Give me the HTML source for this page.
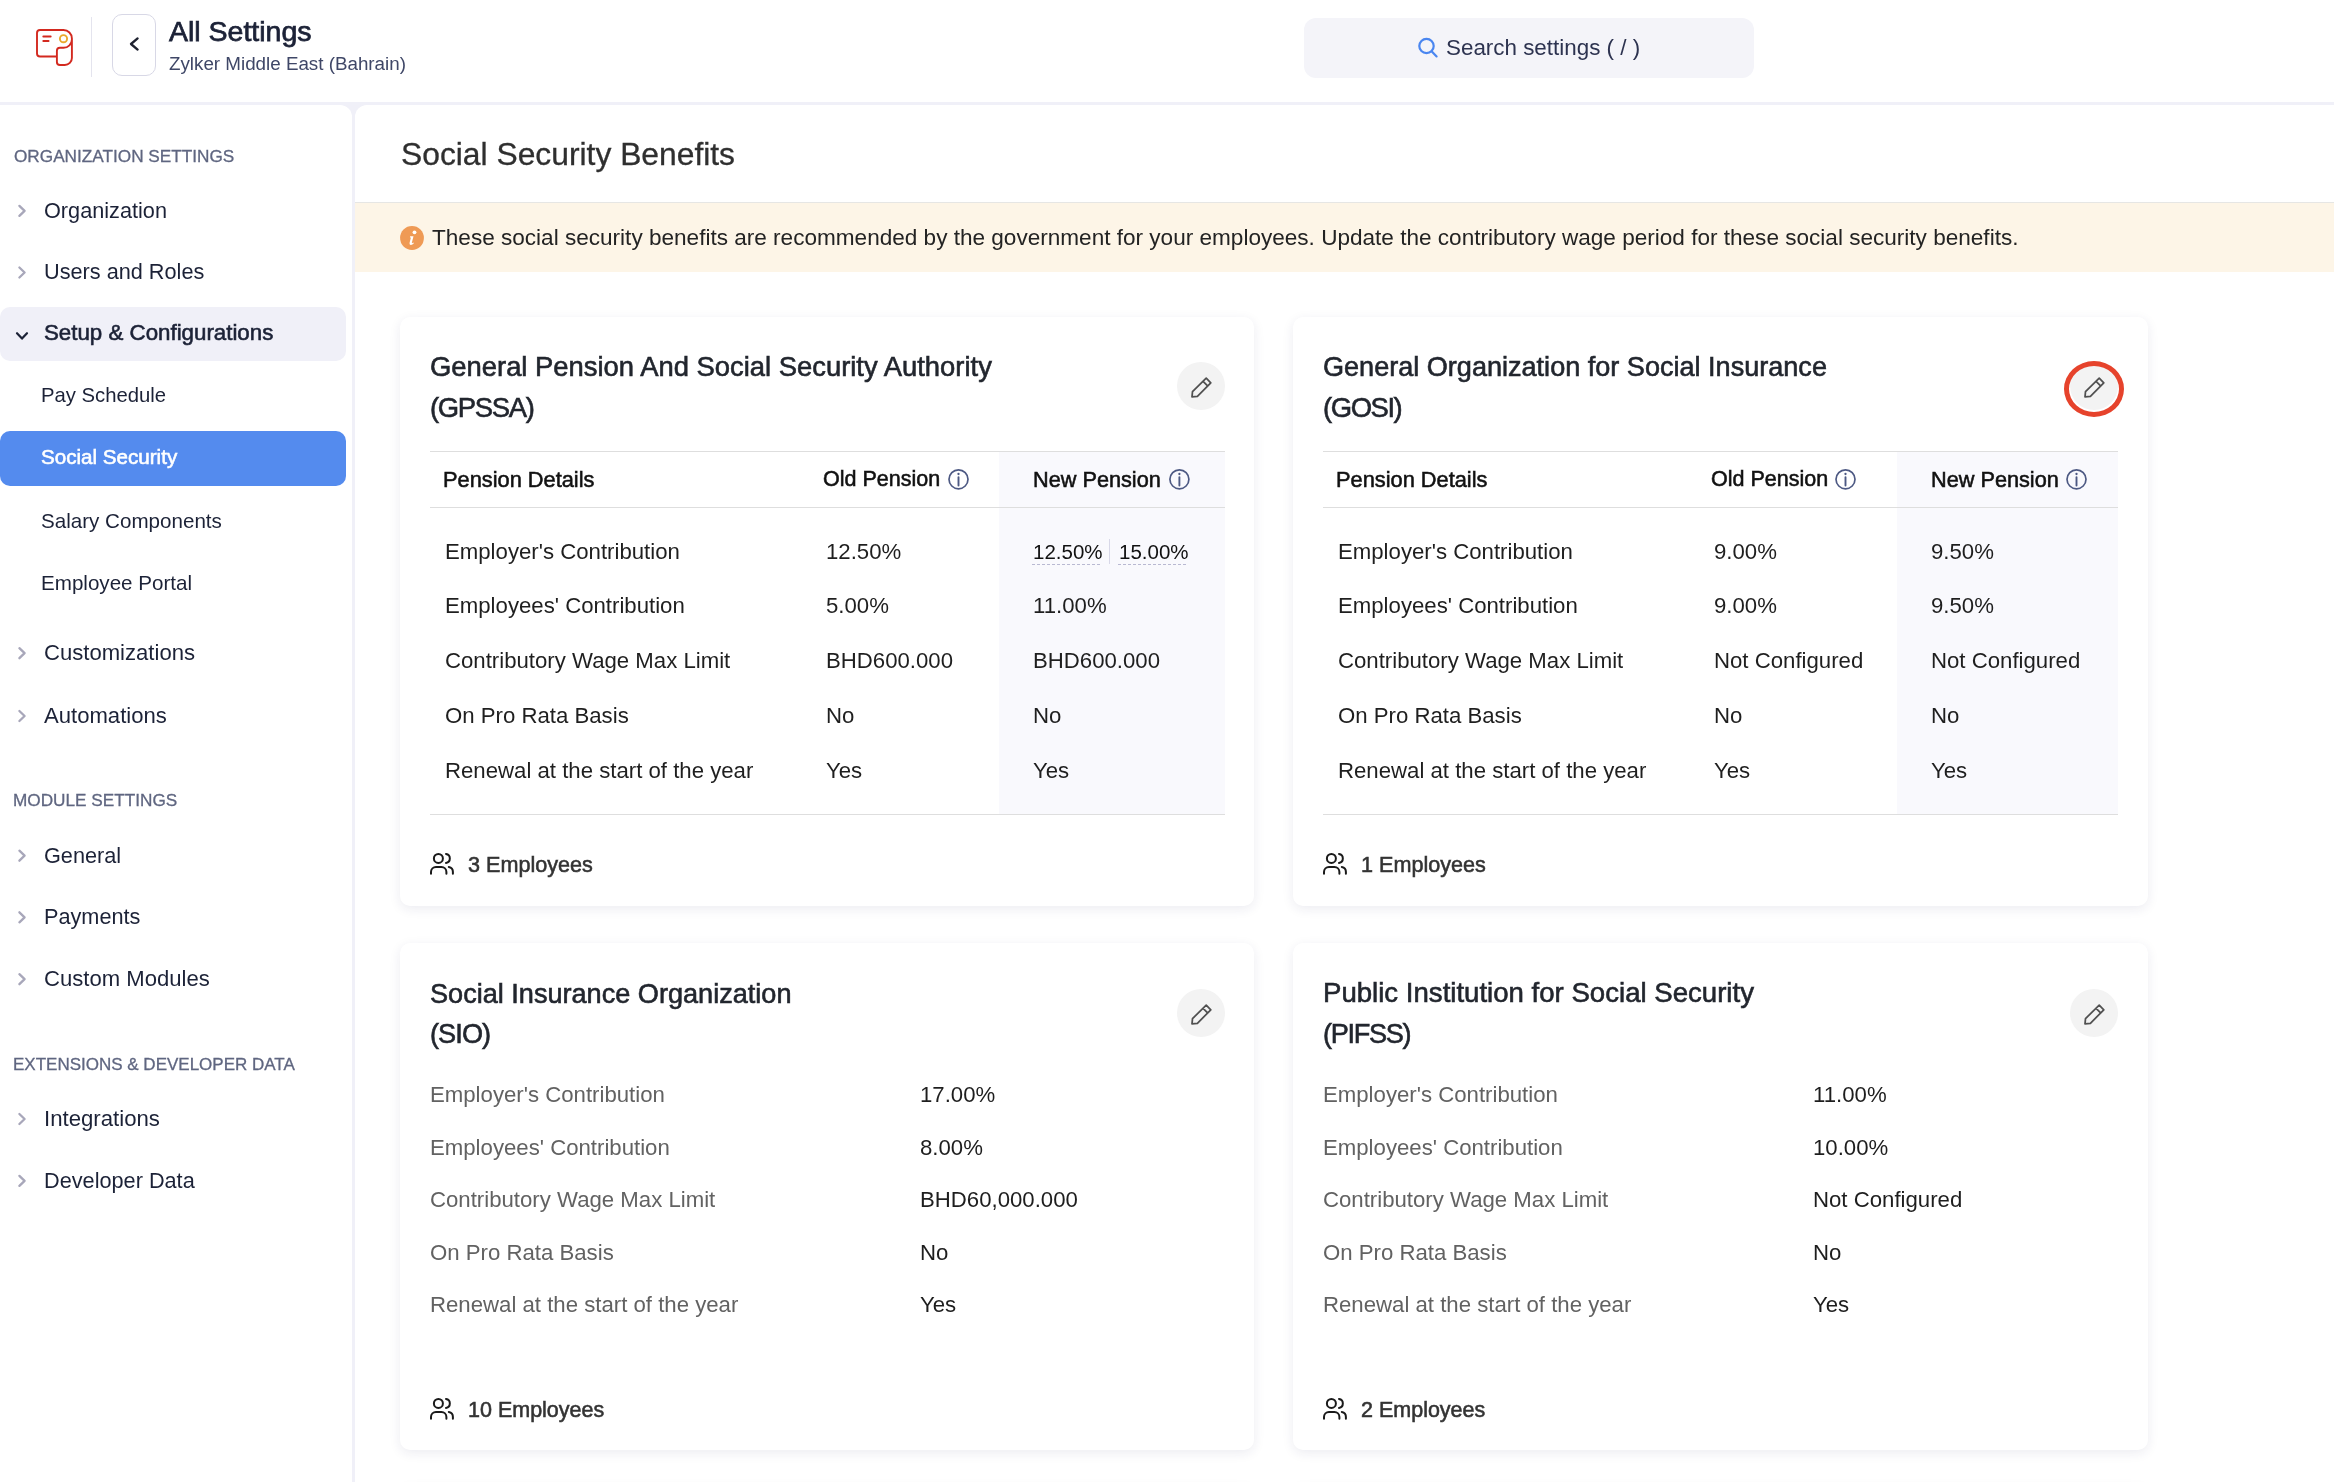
<!DOCTYPE html>
<html><head><meta charset="utf-8"><title>All Settings - Social Security</title>
<style>
html,body{margin:0;padding:0;}
body{width:2334px;height:1482px;overflow:hidden;position:relative;background:#f0f0f8;font-family:"Liberation Sans",sans-serif;}
.a{position:absolute;}
.t{position:absolute;white-space:nowrap;line-height:1;will-change:transform;}
svg.a{overflow:visible;}
</style></head><body>
<div class="a" style="left:0px;top:0px;width:2334px;height:102px;background:#fff"></div>
<svg class="a" style="left:30px;top:24px" width="50" height="48" viewBox="0 0 50 48" fill="none"><path d="M26.9 32.5H10a3 3 0 0 1-3-3V9a3 3 0 0 1 3-3h23.5a8.4 8.4 0 0 1 8.4 8.4V34a7 7 0 0 1-7 7h-5a3 3 0 0 1-3-3V26.8a3 3 0 0 1 3-3h3.6a8.4 8.4 0 0 0 8.4-8.4" stroke="#d3291f" stroke-width="1.9" stroke-linejoin="round"/><path d="M13.3 12.5H20.7M13.3 17H18.6" stroke="#d3291f" stroke-width="1.9" stroke-linecap="round"/><circle cx="33.5" cy="14.7" r="3.6" stroke="#eaa92c" stroke-width="1.9"/></svg>
<div class="a" style="left:91px;top:17px;width:1px;height:60px;background:#e4e4ee"></div>
<div class="a" style="left:112px;top:14px;width:44px;height:62px;border:1px solid #d8d8e6;border-radius:10px;box-sizing:border-box;background:#fff"></div>
<svg class="a" style="left:112px;top:14px" width="44" height="62" viewBox="0 0 44 62" fill="none"><path d="M25.6 24.4L19 30l6.6 5.6" stroke="#1f2230" stroke-width="2.3" stroke-linecap="round" stroke-linejoin="round"/></svg>
<div class="t" style="left:168.5px;top:17.37px;font-size:28.5px;color:#1c2237;-webkit-text-stroke:0.75px #1c2237;">All Settings</div>
<div class="t" style="left:168.5px;top:55.09px;font-size:18.8px;color:#3f4767;">Zylker Middle East (Bahrain)</div>
<div class="a" style="left:1304px;top:18px;width:450px;height:60px;background:#f4f4f9;border-radius:12px"></div>
<svg class="a" style="left:1416px;top:35px" width="24" height="24" viewBox="0 0 24 24" fill="none"><circle cx="10.5" cy="11" r="7.2" stroke="#4a86f0" stroke-width="2.2"/><path d="M15.8 16.4L20.6 21.4" stroke="#4a86f0" stroke-width="2.2" stroke-linecap="round"/></svg>
<div class="t" style="left:1446.0px;top:36.64px;font-size:22.4px;color:#2d3350;">Search settings ( / )</div>
<div class="a" style="left:0px;top:105px;width:352px;height:1377px;background:#fff;border-top-right-radius:12px"></div>
<div class="t" style="left:13.7px;top:147.64px;font-size:17.2px;color:#5f6680;-webkit-text-stroke:0.3px #5f6680;">ORGANIZATION SETTINGS</div>
<div class="t" style="left:13.4px;top:791.74px;font-size:17.2px;color:#5f6680;-webkit-text-stroke:0.3px #5f6680;">MODULE SETTINGS</div>
<div class="t" style="left:13.4px;top:1056.01px;font-size:17.0px;color:#5f6680;-webkit-text-stroke:0.3px #5f6680;">EXTENSIONS &amp; DEVELOPER DATA</div>
<div class="a" style="left:0px;top:307px;width:346px;height:54px;background:#f0f0f8;border-radius:10px"></div>
<div class="a" style="left:0px;top:431px;width:346px;height:55px;background:#548bee;border-radius:10px"></div>
<svg class="a" style="left:14px;top:202px" width="16" height="16" viewBox="0 0 16 16" fill="none"><path d="M5.4 3.90L10.6 8.90L5.4 13.90" stroke="#a8a7ba" stroke-width="2.3" stroke-linecap="round" stroke-linejoin="round"/></svg>
<div class="t" style="left:43.7px;top:199.83px;font-size:21.7px;color:#1c2237;">Organization</div>
<svg class="a" style="left:14px;top:264px" width="16" height="16" viewBox="0 0 16 16" fill="none"><path d="M5.4 3.50L10.6 8.50L5.4 13.50" stroke="#a8a7ba" stroke-width="2.3" stroke-linecap="round" stroke-linejoin="round"/></svg>
<div class="t" style="left:43.7px;top:261.43px;font-size:21.7px;color:#1c2237;">Users and Roles</div>
<svg class="a" style="left:14px;top:645px" width="16" height="16" viewBox="0 0 16 16" fill="none"><path d="M5.4 3.20L10.6 8.20L5.4 13.20" stroke="#a8a7ba" stroke-width="2.3" stroke-linecap="round" stroke-linejoin="round"/></svg>
<div class="t" style="left:43.7px;top:641.79px;font-size:22.1px;color:#1c2237;">Customizations</div>
<svg class="a" style="left:14px;top:708px" width="16" height="16" viewBox="0 0 16 16" fill="none"><path d="M5.4 3.00L10.6 8.00L5.4 13.00" stroke="#a8a7ba" stroke-width="2.3" stroke-linecap="round" stroke-linejoin="round"/></svg>
<div class="t" style="left:43.7px;top:704.59px;font-size:22.1px;color:#1c2237;">Automations</div>
<svg class="a" style="left:14px;top:847px" width="16" height="16" viewBox="0 0 16 16" fill="none"><path d="M5.4 3.70L10.6 8.70L5.4 13.70" stroke="#a8a7ba" stroke-width="2.3" stroke-linecap="round" stroke-linejoin="round"/></svg>
<div class="t" style="left:43.7px;top:844.63px;font-size:21.7px;color:#1c2237;">General</div>
<svg class="a" style="left:14px;top:909px" width="16" height="16" viewBox="0 0 16 16" fill="none"><path d="M5.4 3.30L10.6 8.30L5.4 13.30" stroke="#a8a7ba" stroke-width="2.3" stroke-linecap="round" stroke-linejoin="round"/></svg>
<div class="t" style="left:43.7px;top:906.23px;font-size:21.7px;color:#1c2237;">Payments</div>
<svg class="a" style="left:14px;top:971px" width="16" height="16" viewBox="0 0 16 16" fill="none"><path d="M5.4 3.20L10.6 8.20L5.4 13.20" stroke="#a8a7ba" stroke-width="2.3" stroke-linecap="round" stroke-linejoin="round"/></svg>
<div class="t" style="left:43.7px;top:967.79px;font-size:22.1px;color:#1c2237;">Custom Modules</div>
<svg class="a" style="left:14px;top:1111px" width="16" height="16" viewBox="0 0 16 16" fill="none"><path d="M5.4 3.00L10.6 8.00L5.4 13.00" stroke="#a8a7ba" stroke-width="2.3" stroke-linecap="round" stroke-linejoin="round"/></svg>
<div class="t" style="left:43.7px;top:1107.51px;font-size:22.2px;color:#1c2237;">Integrations</div>
<svg class="a" style="left:14px;top:1172px" width="16" height="16" viewBox="0 0 16 16" fill="none"><path d="M5.4 3.90L10.6 8.90L5.4 13.90" stroke="#a8a7ba" stroke-width="2.3" stroke-linecap="round" stroke-linejoin="round"/></svg>
<div class="t" style="left:43.7px;top:1169.83px;font-size:21.7px;color:#1c2237;">Developer Data</div>
<svg class="a" style="left:14px;top:328px" width="16" height="16" viewBox="0 0 16 16" fill="none"><path d="M3 5.2L8 10.6L13 5.2" stroke="#1c2237" stroke-width="2.2" stroke-linecap="round" stroke-linejoin="round"/></svg>
<div class="t" style="left:43.7px;top:322.12px;font-size:22.3px;color:#1c2237;-webkit-text-stroke:0.6px #1c2237;">Setup &amp; Configurations</div>
<div class="t" style="left:40.5px;top:384.52px;font-size:20.3px;color:#1c2237;">Pay Schedule</div>
<div class="t" style="left:40.5px;top:447.36px;font-size:20.6px;color:#ffffff;-webkit-text-stroke:0.6px #ffffff;">Social Security</div>
<div class="t" style="left:40.5px;top:510.76px;font-size:20.6px;color:#1c2237;">Salary Components</div>
<div class="t" style="left:40.5px;top:572.56px;font-size:20.6px;color:#1c2237;">Employee Portal</div>
<div class="a" style="left:355px;top:105px;width:1979px;height:1377px;background:#fff;border-top-left-radius:12px"></div>
<div class="t" style="left:400.5px;top:139.08px;font-size:31.8px;color:#2f2f2f;-webkit-text-stroke:0.3px #2f2f2f;">Social Security Benefits</div>
<div class="a" style="left:355px;top:202px;width:1979px;height:70px;background:#fdf5e7;border-top:1px solid #e6e6e4;box-sizing:border-box"></div>
<svg class="a" style="left:400px;top:226px" width="24" height="24" viewBox="0 0 24 24" fill="none"><circle cx="12" cy="12" r="11.9" fill="#ef9a55"/><circle cx="14.5" cy="6.3" r="1.9" fill="#fff"/><path d="M10.2 10.3H13.5L11.9 16.6Q11.6 17.7 12.5 17.1L13.3 16.5L13.9 17.2Q12.3 19 10.7 18.9Q9.1 18.7 9.6 16.7L10.9 11.5L9.9 11.6Z" fill="#fff"/></svg>
<div class="t" style="left:432.0px;top:226.69px;font-size:22.57px;color:#232323;">These social security benefits are recommended by the government for your employees. Update the contributory wage period for these social security benefits.</div>
<div class="a" style="left:400px;top:317px;width:854px;height:589px;background:#fff;border-radius:10px;box-shadow:0 3px 12px rgba(40,40,90,0.085)"></div>
<div class="t" style="left:430.0px;top:352.81px;font-size:27.4px;color:#22262e;-webkit-text-stroke:0.6px #22262e;">General Pension And Social Security Authority</div>
<div class="t" style="left:430.0px;top:393.81px;font-size:27.4px;color:#22262e;-webkit-text-stroke:0.6px #22262e;letter-spacing:-1.3px;">(GPSSA)</div>
<div class="a" style="left:1177px;top:362px;width:48px;height:48px;background:#f3f3f3;border-radius:50%"></div>
<svg class="a" style="left:1177px;top:362px" width="48" height="48" viewBox="0 0 48 48" fill="none"><path d="M29.2 16.2L33.8 20.8L20.4 34.3L15 34.9L15.5 29.6ZM26.1 19.3L30.6 23.9" stroke="#505050" stroke-width="1.75" stroke-linejoin="round"/></svg>
<div class="a" style="left:999px;top:452px;width:226px;height:362px;background:#f9f9fd"></div>
<div class="a" style="left:430px;top:451px;width:795px;height:1px;background:#dedede"></div>
<div class="a" style="left:430px;top:507px;width:795px;height:1px;background:#dedede"></div>
<div class="a" style="left:430px;top:814px;width:795px;height:1px;background:#dedede"></div>
<div class="t" style="left:442.6px;top:468.75px;font-size:21.8px;color:#111;-webkit-text-stroke:0.55px #111;">Pension Details</div>
<div class="t" style="left:823.3px;top:469.00px;font-size:21.5px;color:#111;-webkit-text-stroke:0.55px #111;">Old Pension</div>
<div class="t" style="left:1033.0px;top:468.83px;font-size:21.7px;color:#111;-webkit-text-stroke:0.55px #111;">New Pension</div>
<svg class="a" style="left:947px;top:468px" width="22" height="22" viewBox="0 0 22 22" fill="none"><circle cx="11.50" cy="11.30" r="9.5" stroke="#4d5983" stroke-width="1.7"/><path d="M11.50 9.10V17.50" stroke="#4d5983" stroke-width="1.9" stroke-linecap="round"/><circle cx="11.50" cy="6.00" r="1.15" fill="#4d5983"/></svg>
<svg class="a" style="left:1168px;top:468px" width="22" height="22" viewBox="0 0 22 22" fill="none"><circle cx="11.40" cy="11.30" r="9.5" stroke="#4d5983" stroke-width="1.7"/><path d="M11.40 9.10V17.50" stroke="#4d5983" stroke-width="1.9" stroke-linecap="round"/><circle cx="11.40" cy="6.00" r="1.15" fill="#4d5983"/></svg>
<div class="t" style="left:445.3px;top:540.61px;font-size:22.2px;color:#1f1f1f;">Employer's Contribution</div>
<div class="t" style="left:825.6px;top:540.61px;font-size:22.2px;color:#1f1f1f;">12.50%</div>
<div class="t" style="left:445.3px;top:595.41px;font-size:22.2px;color:#1f1f1f;">Employees' Contribution</div>
<div class="t" style="left:825.6px;top:595.41px;font-size:22.2px;color:#1f1f1f;">5.00%</div>
<div class="t" style="left:1032.7px;top:595.41px;font-size:22.2px;color:#1f1f1f;">11.00%</div>
<div class="t" style="left:445.3px;top:650.21px;font-size:22.2px;color:#1f1f1f;">Contributory Wage Max Limit</div>
<div class="t" style="left:825.6px;top:650.21px;font-size:22.2px;color:#1f1f1f;">BHD600.000</div>
<div class="t" style="left:1032.7px;top:650.21px;font-size:22.2px;color:#1f1f1f;">BHD600.000</div>
<div class="t" style="left:445.3px;top:705.01px;font-size:22.2px;color:#1f1f1f;">On Pro Rata Basis</div>
<div class="t" style="left:825.6px;top:705.01px;font-size:22.2px;color:#1f1f1f;">No</div>
<div class="t" style="left:1032.7px;top:705.01px;font-size:22.2px;color:#1f1f1f;">No</div>
<div class="t" style="left:445.3px;top:759.81px;font-size:22.2px;color:#1f1f1f;">Renewal at the start of the year</div>
<div class="t" style="left:825.6px;top:759.81px;font-size:22.2px;color:#1f1f1f;">Yes</div>
<div class="t" style="left:1032.7px;top:759.81px;font-size:22.2px;color:#1f1f1f;">Yes</div>
<svg class="a" style="left:430px;top:853px" width="24" height="22" viewBox="0 0 24 22" fill="none"><circle cx="8.4" cy="5.4" r="4.5" stroke="#1a1a1a" stroke-width="2"/><path d="M1 20.7V19a5 5 0 0 1 5-5h5.4a5 5 0 0 1 5 5v1.7M16 1a4.5 4.5 0 0 1 0 8.9M18.8 14a5 5 0 0 1 4.1 5v1.7" stroke="#1a1a1a" stroke-width="2" stroke-linecap="round"/></svg>
<div class="t" style="left:468.0px;top:854.32px;font-size:21.6px;color:#333;-webkit-text-stroke:0.55px #333;">3 Employees</div>
<div class="t" style="left:1032.7px;top:541.75px;font-size:20.5px;color:#111;">12.50%</div>
<div class="t" style="left:1118.7px;top:541.75px;font-size:20.5px;color:#111;">15.00%</div>
<div class="a" style="left:1109px;top:539px;width:1px;height:25px;background:#d8d8e8"></div>
<div class="a" style="left:1032px;top:564px;width:70px;height:1px;background:repeating-linear-gradient(90deg,#b9b9d2 0 3px,transparent 3px 5px)"></div>
<div class="a" style="left:1118px;top:564px;width:70px;height:1px;background:repeating-linear-gradient(90deg,#b9b9d2 0 3px,transparent 3px 5px)"></div>
<div class="a" style="left:1293px;top:317px;width:855px;height:589px;background:#fff;border-radius:10px;box-shadow:0 3px 12px rgba(40,40,90,0.085)"></div>
<div class="t" style="left:1323.0px;top:353.09px;font-size:27.07px;color:#22262e;-webkit-text-stroke:0.6px #22262e;">General Organization for Social Insurance</div>
<div class="t" style="left:1323.0px;top:393.81px;font-size:27.4px;color:#22262e;-webkit-text-stroke:0.6px #22262e;letter-spacing:-1.4px;">(GOSI)</div>
<div class="a" style="left:2070px;top:362px;width:48px;height:48px;background:#f3f3f3;border-radius:50%"></div>
<svg class="a" style="left:2070px;top:362px" width="48" height="48" viewBox="0 0 48 48" fill="none"><path d="M29.2 16.2L33.8 20.8L20.4 34.3L15 34.9L15.5 29.6ZM26.1 19.3L30.6 23.9" stroke="#505050" stroke-width="1.75" stroke-linejoin="round"/></svg>
<div class="a" style="left:1897px;top:452px;width:221px;height:362px;background:#f9f9fd"></div>
<div class="a" style="left:1323px;top:451px;width:795px;height:1px;background:#dedede"></div>
<div class="a" style="left:1323px;top:507px;width:795px;height:1px;background:#dedede"></div>
<div class="a" style="left:1323px;top:814px;width:795px;height:1px;background:#dedede"></div>
<div class="t" style="left:1335.6px;top:468.75px;font-size:21.8px;color:#111;-webkit-text-stroke:0.55px #111;">Pension Details</div>
<div class="t" style="left:1710.8px;top:469.00px;font-size:21.5px;color:#111;-webkit-text-stroke:0.55px #111;">Old Pension</div>
<div class="t" style="left:1930.6px;top:468.83px;font-size:21.7px;color:#111;-webkit-text-stroke:0.55px #111;">New Pension</div>
<svg class="a" style="left:1834px;top:468px" width="22" height="22" viewBox="0 0 22 22" fill="none"><circle cx="11.50" cy="11.30" r="9.5" stroke="#4d5983" stroke-width="1.7"/><path d="M11.50 9.10V17.50" stroke="#4d5983" stroke-width="1.9" stroke-linecap="round"/><circle cx="11.50" cy="6.00" r="1.15" fill="#4d5983"/></svg>
<svg class="a" style="left:2065px;top:468px" width="22" height="22" viewBox="0 0 22 22" fill="none"><circle cx="11.50" cy="11.30" r="9.5" stroke="#4d5983" stroke-width="1.7"/><path d="M11.50 9.10V17.50" stroke="#4d5983" stroke-width="1.9" stroke-linecap="round"/><circle cx="11.50" cy="6.00" r="1.15" fill="#4d5983"/></svg>
<div class="t" style="left:1338.3px;top:540.61px;font-size:22.2px;color:#1f1f1f;">Employer's Contribution</div>
<div class="t" style="left:1713.7px;top:540.61px;font-size:22.2px;color:#1f1f1f;">9.00%</div>
<div class="t" style="left:1930.6px;top:540.61px;font-size:22.2px;color:#1f1f1f;">9.50%</div>
<div class="t" style="left:1338.3px;top:595.41px;font-size:22.2px;color:#1f1f1f;">Employees' Contribution</div>
<div class="t" style="left:1713.7px;top:595.41px;font-size:22.2px;color:#1f1f1f;">9.00%</div>
<div class="t" style="left:1930.6px;top:595.41px;font-size:22.2px;color:#1f1f1f;">9.50%</div>
<div class="t" style="left:1338.3px;top:650.21px;font-size:22.2px;color:#1f1f1f;">Contributory Wage Max Limit</div>
<div class="t" style="left:1713.7px;top:650.21px;font-size:22.2px;color:#1f1f1f;">Not Configured</div>
<div class="t" style="left:1930.6px;top:650.21px;font-size:22.2px;color:#1f1f1f;">Not Configured</div>
<div class="t" style="left:1338.3px;top:705.01px;font-size:22.2px;color:#1f1f1f;">On Pro Rata Basis</div>
<div class="t" style="left:1713.7px;top:705.01px;font-size:22.2px;color:#1f1f1f;">No</div>
<div class="t" style="left:1930.6px;top:705.01px;font-size:22.2px;color:#1f1f1f;">No</div>
<div class="t" style="left:1338.3px;top:759.81px;font-size:22.2px;color:#1f1f1f;">Renewal at the start of the year</div>
<div class="t" style="left:1713.7px;top:759.81px;font-size:22.2px;color:#1f1f1f;">Yes</div>
<div class="t" style="left:1930.6px;top:759.81px;font-size:22.2px;color:#1f1f1f;">Yes</div>
<svg class="a" style="left:1323px;top:853px" width="24" height="22" viewBox="0 0 24 22" fill="none"><circle cx="8.4" cy="5.4" r="4.5" stroke="#1a1a1a" stroke-width="2"/><path d="M1 20.7V19a5 5 0 0 1 5-5h5.4a5 5 0 0 1 5 5v1.7M16 1a4.5 4.5 0 0 1 0 8.9M18.8 14a5 5 0 0 1 4.1 5v1.7" stroke="#1a1a1a" stroke-width="2" stroke-linecap="round"/></svg>
<div class="t" style="left:1361.0px;top:854.32px;font-size:21.6px;color:#333;-webkit-text-stroke:0.55px #333;">1 Employees</div>
<div class="a" style="left:400px;top:943px;width:854px;height:507px;background:#fff;border-radius:10px;box-shadow:0 3px 12px rgba(40,40,90,0.085)"></div>
<div class="t" style="left:430.0px;top:979.66px;font-size:27.1px;color:#22262e;-webkit-text-stroke:0.6px #22262e;">Social Insurance Organization</div>
<div class="t" style="left:430.0px;top:1019.86px;font-size:27.1px;color:#22262e;-webkit-text-stroke:0.6px #22262e;letter-spacing:-0.9px;">(SIO)</div>
<div class="a" style="left:1177px;top:989px;width:48px;height:48px;background:#f3f3f3;border-radius:50%"></div>
<svg class="a" style="left:1177px;top:989px" width="48" height="48" viewBox="0 0 48 48" fill="none"><path d="M29.2 16.2L33.8 20.8L20.4 34.3L15 34.9L15.5 29.6ZM26.1 19.3L30.6 23.9" stroke="#505050" stroke-width="1.75" stroke-linejoin="round"/></svg>
<div class="t" style="left:430.3px;top:1084.41px;font-size:22.2px;color:#626262;">Employer's Contribution</div>
<div class="t" style="left:920.0px;top:1084.41px;font-size:22.2px;color:#1e1e1e;">17.00%</div>
<div class="t" style="left:430.3px;top:1136.86px;font-size:22.2px;color:#626262;">Employees' Contribution</div>
<div class="t" style="left:920.0px;top:1136.86px;font-size:22.2px;color:#1e1e1e;">8.00%</div>
<div class="t" style="left:430.3px;top:1189.31px;font-size:22.2px;color:#626262;">Contributory Wage Max Limit</div>
<div class="t" style="left:920.0px;top:1189.31px;font-size:22.2px;color:#1e1e1e;">BHD60,000.000</div>
<div class="t" style="left:430.3px;top:1241.76px;font-size:22.2px;color:#626262;">On Pro Rata Basis</div>
<div class="t" style="left:920.0px;top:1241.76px;font-size:22.2px;color:#1e1e1e;">No</div>
<div class="t" style="left:430.3px;top:1294.21px;font-size:22.2px;color:#626262;">Renewal at the start of the year</div>
<div class="t" style="left:920.0px;top:1294.21px;font-size:22.2px;color:#1e1e1e;">Yes</div>
<svg class="a" style="left:430px;top:1398px" width="24" height="22" viewBox="0 0 24 22" fill="none"><circle cx="8.4" cy="5.4" r="4.5" stroke="#1a1a1a" stroke-width="2"/><path d="M1 20.7V19a5 5 0 0 1 5-5h5.4a5 5 0 0 1 5 5v1.7M16 1a4.5 4.5 0 0 1 0 8.9M18.8 14a5 5 0 0 1 4.1 5v1.7" stroke="#1a1a1a" stroke-width="2" stroke-linecap="round"/></svg>
<div class="t" style="left:468.0px;top:1399.60px;font-size:21.5px;color:#333;-webkit-text-stroke:0.55px #333;">10 Employees</div>
<div class="a" style="left:1293px;top:943px;width:855px;height:507px;background:#fff;border-radius:10px;box-shadow:0 3px 12px rgba(40,40,90,0.085)"></div>
<div class="t" style="left:1323.0px;top:979.24px;font-size:27.6px;color:#22262e;-webkit-text-stroke:0.6px #22262e;">Public Institution for Social Security</div>
<div class="t" style="left:1323.0px;top:1019.86px;font-size:27.1px;color:#22262e;-webkit-text-stroke:0.6px #22262e;letter-spacing:-1.3px;">(PIFSS)</div>
<div class="a" style="left:2070px;top:989px;width:48px;height:48px;background:#f3f3f3;border-radius:50%"></div>
<svg class="a" style="left:2070px;top:989px" width="48" height="48" viewBox="0 0 48 48" fill="none"><path d="M29.2 16.2L33.8 20.8L20.4 34.3L15 34.9L15.5 29.6ZM26.1 19.3L30.6 23.9" stroke="#505050" stroke-width="1.75" stroke-linejoin="round"/></svg>
<div class="t" style="left:1323.3px;top:1084.41px;font-size:22.2px;color:#626262;">Employer's Contribution</div>
<div class="t" style="left:1813.0px;top:1084.41px;font-size:22.2px;color:#1e1e1e;">11.00%</div>
<div class="t" style="left:1323.3px;top:1136.86px;font-size:22.2px;color:#626262;">Employees' Contribution</div>
<div class="t" style="left:1813.0px;top:1136.86px;font-size:22.2px;color:#1e1e1e;">10.00%</div>
<div class="t" style="left:1323.3px;top:1189.31px;font-size:22.2px;color:#626262;">Contributory Wage Max Limit</div>
<div class="t" style="left:1813.0px;top:1189.31px;font-size:22.2px;color:#1e1e1e;">Not Configured</div>
<div class="t" style="left:1323.3px;top:1241.76px;font-size:22.2px;color:#626262;">On Pro Rata Basis</div>
<div class="t" style="left:1813.0px;top:1241.76px;font-size:22.2px;color:#1e1e1e;">No</div>
<div class="t" style="left:1323.3px;top:1294.21px;font-size:22.2px;color:#626262;">Renewal at the start of the year</div>
<div class="t" style="left:1813.0px;top:1294.21px;font-size:22.2px;color:#1e1e1e;">Yes</div>
<svg class="a" style="left:1323px;top:1398px" width="24" height="22" viewBox="0 0 24 22" fill="none"><circle cx="8.4" cy="5.4" r="4.5" stroke="#1a1a1a" stroke-width="2"/><path d="M1 20.7V19a5 5 0 0 1 5-5h5.4a5 5 0 0 1 5 5v1.7M16 1a4.5 4.5 0 0 1 0 8.9M18.8 14a5 5 0 0 1 4.1 5v1.7" stroke="#1a1a1a" stroke-width="2" stroke-linecap="round"/></svg>
<div class="t" style="left:1361.0px;top:1399.60px;font-size:21.5px;color:#333;-webkit-text-stroke:0.55px #333;">2 Employees</div>
<div class="a" style="left:400px;top:1486px;width:854px;height:300px;background:#fff;border-radius:10px;box-shadow:0 3px 12px rgba(40,40,90,0.085)"></div>
<div class="a" style="left:1293px;top:1486px;width:855px;height:300px;background:#fff;border-radius:10px;box-shadow:0 3px 12px rgba(40,40,90,0.085)"></div>
<div class="a" style="left:2064px;top:361px;width:60px;height:56px;border:5px solid #e6432c;border-radius:50%;box-sizing:border-box"></div>
</body></html>
